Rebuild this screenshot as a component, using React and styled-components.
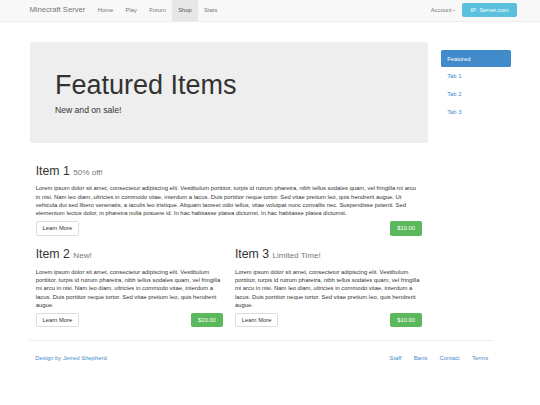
import styled, { createGlobalStyle } from 'styled-components';

const GlobalStyle = createGlobalStyle`
  html, body {
    margin: 0;
    padding: 0;
    background: #fff;
  }
  body {
    font-family: "Liberation Sans", Arial, sans-serif;
    font-size: 5.88px;
    line-height: 8.2px;
    color: #333;
  }
  * {
    box-sizing: border-box;
  }
`;

const LONG_TEXT =
  'Lorem ipsum dolor sit amet, consectetur adipiscing elit. Vestibulum porttitor, turpis id rutrum pharetra, nibh tellus sodales quam, vel fringilla mi arcu in nisi. Nam leo diam, ultricies in commodo vitae, interdum a lacus. Duis porttitor neque tortor. Sed vitae pretium leo, quis hendrerit augue. Ut vehicula dui sed libero venenatis, a iaculis leo tristique. Aliquam laoreet odio tellus, vitae volutpat nunc convallis nec. Suspendisse potenti. Sed elementum lectus dolor, in pharetra nulla posuere id. In hac habitasse platea dictumst. In hac habitasse platea dictumst.';

const SHORT_TEXT =
  'Lorem ipsum dolor sit amet, consectetur adipiscing elit. Vestibulum porttitor, turpis id rutrum pharetra, nibh tellus sodales quam, vel fringilla mi arcu in nisi. Nam leo diam, ultricies in commodo vitae, interdum a lacus. Duis porttitor neque tortor. Sed vitae pretium leo, quis hendrerit augue.';

const navLinks = ['Home', 'Play', 'Forum', 'Shop', 'Stats'];
const tabs = ['Featured', 'Tab 1', 'Tab 2', 'Tab 3'];
const footerLinks = ['Staff', 'Bans', 'Contact', 'Terms'];

const Item = ({ name, tag, text }) => (
  <ItemBlock>
    <ItemTitle>
      {name} <small>{tag}</small>
    </ItemTitle>
    <ItemText>{text}</ItemText>
    <ButtonRow>
      <Button>Learn More</Button>
      <Button $variant="success">$10.00</Button>
    </ButtonRow>
  </ItemBlock>
);

const App = () => {
  return (
    <>
      <GlobalStyle />
      <Navbar>
        <NavContainer>
          <Brand>Minecraft Server</Brand>
          {navLinks.map((link) => (
            <NavLink key={link} $active={link === 'Shop'}>
              {link}
            </NavLink>
          ))}
          <NavRight>
            <NavLink>
              Account <Caret />
            </NavLink>
            <Button $variant="info" $nav>
              IP: Server.com
            </Button>
          </NavRight>
        </NavContainer>
      </Navbar>

      <Container>
        <Main>
          <Jumbotron>
            <h1>Featured Items</h1>
            <p>New and on sale!</p>
          </Jumbotron>
          <Item name="Item 1" tag="50% off!" text={LONG_TEXT} />
          <ItemGrid>
            <Item name="Item 2" tag="New!" text={SHORT_TEXT} />
            <Item name="Item 3" tag="Limited Time!" text={SHORT_TEXT} />
          </ItemGrid>
        </Main>
        <Sidebar>
          {tabs.map((tab) => (
            <Pill key={tab} $active={tab === 'Featured'}>
              {tab}
            </Pill>
          ))}
        </Sidebar>
      </Container>

      <Footer>
        <Credit>Design by Jerred Shepherd</Credit>
        <FooterLinks>
          {footerLinks.map((link) => (
            <FooterLink key={link}>{link}</FooterLink>
          ))}
        </FooterLinks>
      </Footer>
    </>
  );
};

export default App;

const Navbar = styled.nav`
  height: 21.5px;
  background-color: #f8f8f8;
  border-bottom: 1px solid #ececec;
`;

const NavContainer = styled.div`
  width: 481px;
  height: 20.5px;
  margin: 0 auto;
  display: flex;
  align-items: stretch;
`;

const Brand = styled.div`
  font-size: 7.6px;
  line-height: 20.5px;
  color: #777;
  padding-right: 6.4px;
`;

const NavLink = styled.div`
  display: flex;
  align-items: center;
  gap: 1.5px;
  padding: 0 6.15px;
  font-size: 5.82px;
  color: ${({ $active }) => ($active ? '#555' : '#777')};
  background-color: ${({ $active }) => ($active ? '#e7e7e7' : 'transparent')};
`;

const Caret = styled.span`
  display: inline-block;
  width: 0;
  height: 0;
  border-top: 1.7px solid #777;
  border-left: 1.7px solid transparent;
  border-right: 1.7px solid transparent;
`;

const NavRight = styled.div`
  margin-left: auto;
  margin-right: -6.2px;
  display: flex;
  align-items: center;
`;

const Container = styled.div`
  width: 481px;
  margin: 20.5px auto 0;
  display: flex;
  gap: 13px;
  align-items: flex-start;
`;

const Main = styled.div`
  width: 398.5px;
`;

const Jumbotron = styled.div`
  height: 101px;
  padding: 29.1px 25.5px 0;
  background-color: #eee;
  border-radius: 2.5px;
  margin-bottom: 13.8px;

  h1 {
    margin: 0 0 3.7px;
    font-size: 27px;
    line-height: 29.7px;
    font-weight: 400;
    color: #333;
  }

  p {
    margin: 0;
    font-size: 8.6px;
    line-height: 12.3px;
    color: #333;
  }
`;

const ItemGrid = styled.div`
  display: grid;
  grid-template-columns: 1fr 1fr;
`;

const ItemBlock = styled.div`
  display: flow-root;
  padding: 0 6.2px;
`;

const ItemTitle = styled.h2`
  margin: 8.2px 0 5px;
  font-size: 12.3px;
  line-height: 13.5px;
  font-weight: 400;
  color: #333;

  small {
    font-size: 8.1px;
    color: #777;
  }
`;

const ItemText = styled.p`
  margin: 0 0 4.1px;
`;

const ButtonRow = styled.div`
  display: flex;
  justify-content: space-between;
  margin-bottom: 4.6px;
`;

const buttonColors = {
  default: { bg: '#fff', border: '#ddd', color: '#333' },
  success: { bg: '#5cb85c', border: '#5cb85c', color: '#fff' },
  info: { bg: '#5bc0de', border: '#5bc0de', color: '#fff' },
};

const Button = styled.div`
  height: ${({ $nav }) => ($nav ? '14.4px' : '14.3px')};
  padding: 0 ${({ $nav }) => ($nav ? '7.1px' : '5.8px')};
  margin-left: ${({ $nav }) => ($nav ? '1px' : '0')};
  display: flex;
  align-items: center;
  font-size: 5.82px;
  border-radius: 1.6px;
  background-color: ${({ $variant = 'default' }) => buttonColors[$variant].bg};
  border: 1px solid ${({ $variant = 'default' }) => buttonColors[$variant].border};
  color: ${({ $variant = 'default' }) => buttonColors[$variant].color};
`;

const Sidebar = styled.div`
  width: 69.5px;
  margin-top: 8.2px;
  display: flex;
  flex-direction: column;
  gap: 0.8px;
`;

const Pill = styled.div`
  height: 17px;
  display: flex;
  align-items: center;
  padding: 0 6.15px;
  border-radius: 1.6px;
  font-size: 5.82px;
  color: ${({ $active }) => ($active ? '#fff' : '#428bca')};
  background-color: ${({ $active }) => ($active ? '#428bca' : 'transparent')};
`;

const Footer = styled.footer`
  width: 465.3px;
  margin: 8.2px 0 0 29px;
  padding-top: 12.4px;
  border-top: 1px solid #eee;
  display: flex;
  justify-content: space-between;
`;

const Credit = styled.div`
  padding-left: 6.2px;
  color: #428bca;
`;

const FooterLinks = styled.div`
  display: flex;
`;

const FooterLink = styled.div`
  padding: 0 6.2px;
  color: #428bca;
`;
